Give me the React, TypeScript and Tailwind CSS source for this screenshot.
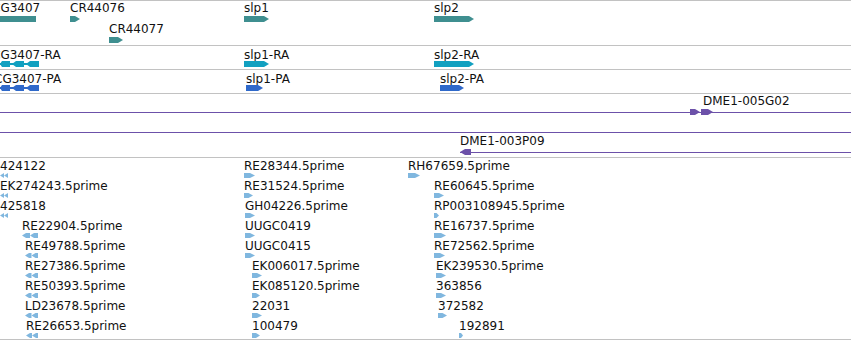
import React from 'react';

type Shape = 'rect' | 'right' | 'left' | 'left2' | 'exons';

interface Feature {
  label?: string;
  lx?: number;
  x: number;
  w: number;
  top: number;
  barTop: number;
  h?: number;
  shape: Shape;
}

const TEAL = '#3f8f90';
const CYAN = '#12a0c0';
const BLUE = '#2f69ca';
const PURPLE = '#6c51a9';
const EST = '#80b7df';

const Glyph: React.FC<{ shape: Shape; w: number; h: number; color: string }> = ({ shape, w, h, color }) => {
  const t = Math.min(5, w * 0.5);
  const m = h / 2;
  if (shape === 'rect') return <rect x={0} y={0} width={w} height={h} fill={color} />;
  if (shape === 'right')
    return <polygon points={`0,0 ${w - t},0 ${w},${m} ${w - t},${h} 0,${h}`} fill={color} />;
  if (shape === 'left')
    return <polygon points={`${w},0 ${t},0 0,${m} ${t},${h} ${w},${h}`} fill={color} />;
  if (shape === 'left2') {
    const half = w / 2;
    const a = Math.min(4, half);
    return (
      <g fill={color}>
        <polygon points={`${half},0 ${a},0 0,${m} ${a},${h} ${half},${h}`} />
        <polygon points={`${w},0 ${half + a},0 ${half},${m} ${half + a},${h} ${w},${h}`} />
      </g>
    );
  }
  // spliced transcript on the minus strand
  return (
    <g fill={color}>
      <rect x={0} y={m - 1} width={w} height={2} />
      <polygon points={`10,0 2,0 0,${m} 2,${h} 10,${h}`} />
      <polygon points={`24,0 16,0 12,${m} 16,${h} 24,${h}`} />
      <polygon points={`${w},0 30,0 26,${m} 30,${h} ${w},${h}`} />
    </g>
  );
};

const FeatureView: React.FC<{ f: Feature; color: string }> = ({ f, color }) => {
  const h = f.h ?? 6;
  return (
    <>
      {f.label && (
        <span
          className="absolute whitespace-nowrap text-[12px] leading-[14px] text-[#111]"
          style={{ left: f.lx ?? f.x, top: f.top }}
        >
          {f.label}
        </span>
      )}
      <svg className="absolute" style={{ left: f.x, top: f.barTop }} width={f.w} height={h}>
        <Glyph shape={f.shape} w={f.w} h={h} color={color} />
      </svg>
    </>
  );
};

const Track: React.FC<{ className: string; children: React.ReactNode }> = ({ className, children }) => (
  <div className={`relative w-full overflow-hidden border-t border-[#c2c2c2] ${className}`}>{children}</div>
);

const genes: Feature[] = [
  { label: 'CG3407', lx: -8, x: 0, w: 36, top: 0, barTop: 15, shape: 'rect' },
  { label: 'CR44076', x: 70, w: 10, top: 0, barTop: 15, shape: 'right' },
  { label: 'CR44077', x: 109, w: 14, top: 21, barTop: 36, shape: 'right' },
  { label: 'slp1', x: 244, w: 25, top: 0, barTop: 15, shape: 'right' },
  { label: 'slp2', x: 434, w: 40, top: 0, barTop: 15, shape: 'right' },
];

const transcripts: Feature[] = [
  { label: 'CG3407-RA', lx: -8, x: 0, w: 39, top: 2, barTop: 15, shape: 'exons' },
  { label: 'slp1-RA', x: 244, w: 25, top: 2, barTop: 15, shape: 'right' },
  { label: 'slp2-RA', x: 434, w: 40, top: 2, barTop: 15, shape: 'right' },
];

const proteins: Feature[] = [
  { label: 'CG3407-PA', lx: -6, x: 0, w: 39, top: 2, barTop: 15, shape: 'exons' },
  { label: 'slp1-PA', x: 246, w: 17, top: 2, barTop: 15, shape: 'right' },
  { label: 'slp2-PA', x: 440, w: 24, top: 2, barTop: 15, shape: 'right' },
];

const clones: Feature[] = [
  { label: 'DME1-005G02', lx: 703, x: 690, w: 10, top: 0, barTop: 15, shape: 'right' },
  { x: 701, w: 12, top: 0, barTop: 15, shape: 'right' },
  { label: 'DME1-003P09', x: 460, w: 11, top: 40, barTop: 55, shape: 'left' },
];

// [label, x, width] per row, one list per cluster
const estCols: { shape: Shape; rows: [string, number, number][] }[] = [
  {
    shape: 'left2',
    rows: [
      ['424122', 0, 8],
      ['EK274243.5prime', 0, 8],
      ['425818', 0, 8],
      ['RE22904.5prime', 22, 16],
      ['RE49788.5prime', 25, 13],
      ['RE27386.5prime', 25, 13],
      ['RE50393.5prime', 25, 13],
      ['LD23678.5prime', 25, 13],
      ['RE26653.5prime', 26, 12],
    ],
  },
  {
    shape: 'right',
    rows: [
      ['RE28344.5prime', 244, 11],
      ['RE31524.5prime', 244, 9],
      ['GH04226.5prime', 245, 10],
      ['UUGC0419', 245, 10],
      ['UUGC0415', 245, 10],
      ['EK006017.5prime', 252, 10],
      ['EK085120.5prime', 252, 8],
      ['22031', 252, 10],
      ['100479', 252, 8],
    ],
  },
  {
    shape: 'right',
    rows: [
      ['RH67659.5prime', 408, 12],
      ['RE60645.5prime', 434, 10],
      ['RP003108945.5prime', 434, 5],
      ['RE16737.5prime', 434, 12],
      ['RE72562.5prime', 434, 11],
      ['EK239530.5prime', 436, 10],
      ['363856', 436, 10],
      ['372582', 438, 9],
      ['192891', 459, 4],
    ],
  },
];

const ests: Feature[] = estCols.flatMap((col) =>
  col.rows.map(([label, x, w], i) => ({
    label,
    x,
    w,
    top: 1 + i * 20,
    barTop: 15 + i * 20,
    h: 5,
    shape: col.shape,
  }))
);

const App: React.FC = () => {
  return (
    <div className="w-[851px] h-[341px] bg-white overflow-hidden font-['DejaVu_Sans','Liberation_Sans',sans-serif]">
      <Track className="h-[45px]">
        {genes.map((f, i) => (
          <FeatureView key={i} f={f} color={TEAL} />
        ))}
      </Track>
      <Track className="h-[24px]">
        {transcripts.map((f, i) => (
          <FeatureView key={i} f={f} color={CYAN} />
        ))}
      </Track>
      <Track className="h-[24px]">
        {proteins.map((f, i) => (
          <FeatureView key={i} f={f} color={BLUE} />
        ))}
      </Track>
      <Track className="h-[64px]">
        <div className="absolute left-0 right-0 top-[18px] h-px bg-[#6c51a9]" />
        <div className="absolute left-0 right-0 top-[38px] h-px bg-[#6c51a9]" />
        <div className="absolute left-[460px] right-0 top-[58px] h-px bg-[#6c51a9]" />
        {clones.map((f, i) => (
          <FeatureView key={i} f={f} color={PURPLE} />
        ))}
      </Track>
      <Track className="h-[183px] border-b">
        {ests.map((f, i) => (
          <FeatureView key={i} f={f} color={EST} />
        ))}
      </Track>
    </div>
  );
};

export default App;
